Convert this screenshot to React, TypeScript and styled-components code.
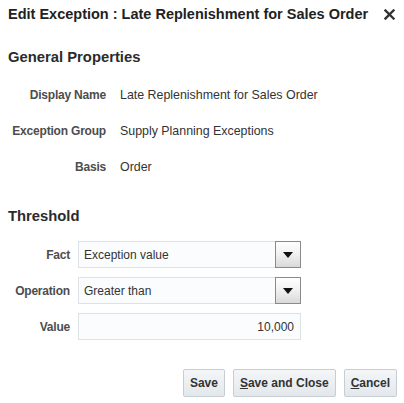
import React from "react";
import styled, { createGlobalStyle } from "styled-components";

const Global = createGlobalStyle`
  html, body { margin: 0; padding: 0; background: #fff; }
  body { font-family: "Liberation Sans", Arial, sans-serif; color: #333; }
`;

const Dialog = styled.div`
  width: 404px;
  height: 403px;
  box-sizing: border-box;
  display: flex;
  flex-direction: column;
  background: #fff;
`;

const Header = styled.div`
  height: 28px;
  display: flex;
  align-items: center;
  justify-content: space-between;
  padding: 0 9px 0 8px;
`;

const Title = styled.div`
  font-size: 14.5px;
  font-weight: bold;
  color: #222;
  white-space: nowrap;
`;

const CloseButton = styled.button`
  border: 0;
  background: transparent;
  padding: 0;
  width: 12px;
  height: 12px;
  display: flex;
  align-items: center;
  justify-content: center;
  cursor: pointer;
`;

const SectionHeading = styled.div<{ $top: number }>`
  margin-top: ${(p) => p.$top}px;
  height: 20px;
  line-height: 20px;
  padding-left: 8px;
  font-size: 14.8px;
  font-weight: bold;
  color: #2b2b2b;
`;

const PropGrid = styled.div`
  margin-top: 10px;
  display: grid;
  grid-template-columns: 106px 1fr;
  column-gap: 14px;
  grid-auto-rows: 36px;
  align-items: center;
`;

const Label = styled.div`
  text-align: right;
  font-size: 12px;
  letter-spacing: -0.2px;
  font-weight: bold;
  color: #4d4d4d;
  white-space: nowrap;
`;

const Value = styled.div`
  font-size: 12.4px;
  color: #333;
  white-space: nowrap;
`;

const FormGrid = styled.div`
  margin-top: 15px;
  display: grid;
  grid-template-columns: 70px 223px;
  column-gap: 8px;
  row-gap: 9px;
  grid-auto-rows: 27px;
  align-items: center;
`;

const Field = styled.div`
  height: 27px;
  box-sizing: border-box;
  border: 1px solid #dde2e7;
  background: #fbfcfd;
  display: flex;
  align-items: center;
  font-size: 12px;
  color: #333;
`;

const FieldText = styled.div<{ $align?: "left" | "right" }>`
  flex: 1;
  padding: 0 6px 0 5px;
  text-align: ${(p) => p.$align ?? "left"};
`;

const DropButton = styled.div`
  width: 26px;
  height: 27px;
  margin: -1px -1px -1px 0;
  box-sizing: border-box;
  border: 1px solid #8a8a8a;
  background: linear-gradient(#ffffff, #f2f2f2 45%, #d9d9d9);
  display: flex;
  align-items: center;
  justify-content: center;
`;

const Footer = styled.div`
  margin-top: 29px;
  display: flex;
  justify-content: flex-end;
  gap: 8px;
  padding-right: 7px;
`;

const Button = styled.button`
  height: 28px;
  box-sizing: border-box;
  padding: 0 6px;
  border: 1px solid #c5ced6;
  border-radius: 2px;
  background: linear-gradient(#f4f6f8, #e3e8ec);
  font-family: "Liberation Sans", Arial, sans-serif;
  font-size: 12px;
  font-weight: bold;
  color: #333;
  cursor: pointer;
`;

const Mnemonic = styled.span`
  text-decoration: underline;
`;

const Triangle = () => (
  <svg width="10" height="6" viewBox="0 0 10 6">
    <polygon points="0,0 10,0 5,6" fill="#111" />
  </svg>
);

export default function App() {
  return (
    <>
      <Global />
      <Dialog>
        <Header>
          <Title>Edit Exception : Late Replenishment for Sales Order</Title>
          <CloseButton aria-label="Close">
            <svg width="11" height="11" viewBox="0 0 11 11">
              <path d="M1.5 1.5 L9.5 9.5 M9.5 1.5 L1.5 9.5" stroke="#333" strokeWidth="2.4" strokeLinecap="square" />
            </svg>
          </CloseButton>
        </Header>

        <SectionHeading $top={19}>General Properties</SectionHeading>
        <PropGrid>
          <Label>Display Name</Label>
          <Value>Late Replenishment for Sales Order</Value>
          <Label>Exception Group</Label>
          <Value>Supply Planning Exceptions</Value>
          <Label>Basis</Label>
          <Value>Order</Value>
        </PropGrid>

        <SectionHeading $top={21}>Threshold</SectionHeading>
        <FormGrid>
          <Label>Fact</Label>
          <Field>
            <FieldText>Exception value</FieldText>
            <DropButton><Triangle /></DropButton>
          </Field>
          <Label>Operation</Label>
          <Field>
            <FieldText>Greater than</FieldText>
            <DropButton><Triangle /></DropButton>
          </Field>
          <Label>Value</Label>
          <Field>
            <FieldText $align="right">10,000</FieldText>
          </Field>
        </FormGrid>

        <Footer>
          <Button>Save</Button>
          <Button><Mnemonic>S</Mnemonic>ave and Close</Button>
          <Button><Mnemonic>C</Mnemonic>ancel</Button>
        </Footer>
      </Dialog>
    </>
  );
}
